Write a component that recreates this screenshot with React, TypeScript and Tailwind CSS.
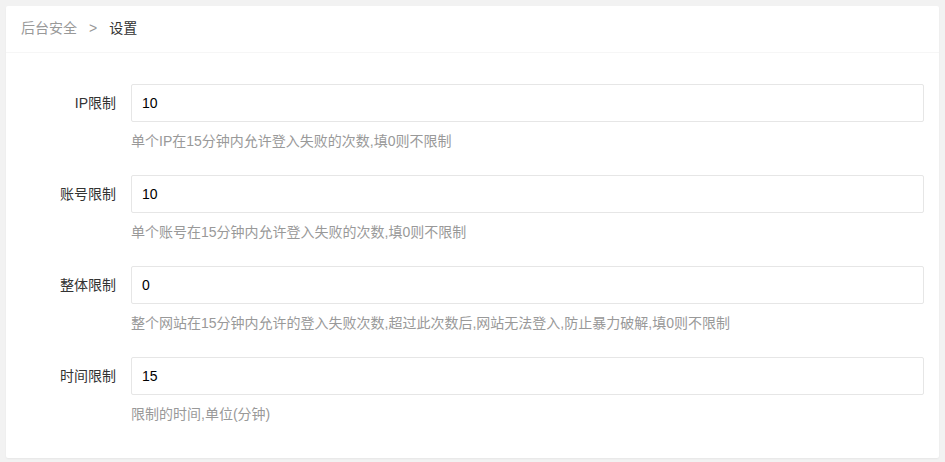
const rows = [
  { label: 'IP限制', value: '10', help: '单个IP在15分钟内允许登入失败的次数,填0则不限制' },
  { label: '账号限制', value: '10', help: '单个账号在15分钟内允许登入失败的次数,填0则不限制' },
  { label: '整体限制', value: '0', help: '整个网站在15分钟内允许的登入失败次数,超过此次数后,网站无法登入,防止暴力破解,填0则不限制' },
  { label: '时间限制', value: '15', help: '限制的时间,单位(分钟)' },
]

export default function App() {
  return (
    <div
      className="min-h-[462px] bg-[#f2f2f2] p-[6px] pb-[5px]"
      style={{ fontFamily: '"Liberation Sans", "Noto Sans CJK SC", sans-serif' }}
    >
      <div className="rounded-[2px] bg-white shadow-[0_1px_2px_rgba(0,0,0,0.05)]">
        <div className="flex h-[47px] items-center border-b border-[#f6f6f6] px-[15px] pb-[2px] text-[14px]">
          <span className="text-[#999]">后台安全</span>
          <span className="mx-[12px] text-[#999]">&gt;</span>
          <span className="text-[#333]">设置</span>
        </div>
        <div className="pt-[31px] pb-[34px] pr-[15px]">
          {rows.map((r) => (
            <div key={r.label} className="mb-[24px] flex last:mb-0">
              <div className="w-[125px] shrink-0 pr-[15px] text-right text-[14px] leading-[38px] text-[#333]">
                {r.label}
              </div>
              <div className="flex-1">
                <input
                  defaultValue={r.value}
                  className="h-[38px] w-full rounded-[2px] border border-[#e6e6e6] bg-white px-[10px] text-[14px] text-black outline-none"
                />
                <div className="mt-[9px] text-[14px] leading-[20px] text-[#999]">{r.help}</div>
              </div>
            </div>
          ))}
        </div>
      </div>
    </div>
  )
}
